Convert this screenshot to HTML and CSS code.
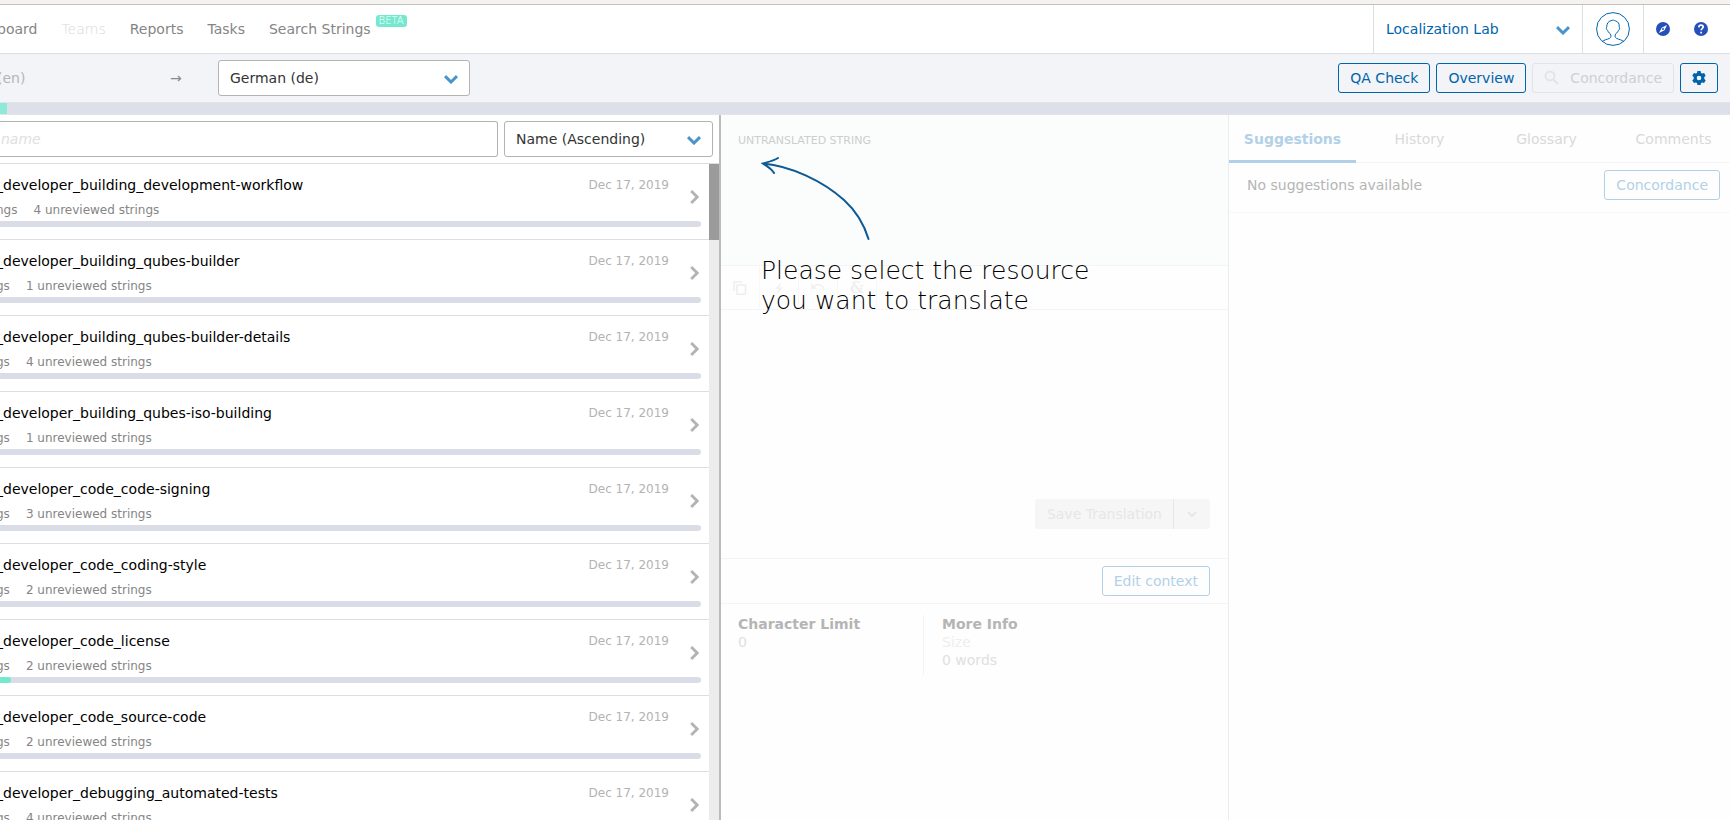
FILE: index.html
```
<!DOCTYPE html>
<html lang="en">
<head>
<meta charset="utf-8">
<title>Localization Lab – Translate</title>
<link rel="stylesheet" href="styles.css">
</head>
<body>
<div class="browser-edge"></div>
<header class="topnav">
  <nav class="menu">
    <a href="#">board</a>
    <a href="#" class="faint">Teams</a>
    <a href="#">Reports</a>
    <a href="#">Tasks</a>
    <a href="#">Search Strings</a>
    <span class="beta">BETA</span>
  </nav>
  <div class="org">
    <select class="org-select" aria-label="Organization"><option>Localization Lab</option></select>
    <svg class="caret" viewBox="0 0 14 9"><path d="M1 1.200l6 5.800 6-5.800"/></svg>
  </div>
  <button class="avatar" aria-label="Account">
    <svg width="34" height="34" viewBox="0 0 34 34" fill="none" stroke="#0064ab"><circle cx="17" cy="17" r="16.400"/><path d="M6 29.600C8 28 11 27.400 13.500 26.400C15.600 25.200 15 23.200 14.300 21.800C12.600 20.600 12 19.500 11.500 18.300C10.300 17.500 10.100 16 10.800 14.800C10.600 11.500 12.500 9.200 15 8.700C16.500 7.800 18.500 8.200 19.700 9C22 9.600 23.500 11.500 23.200 14.800C23.900 16 23.700 17.500 22.500 18.300C22 19.500 21.400 20.600 19.700 21.800C19 23.200 18.400 25.200 20.500 26.400C23 27.400 26 28 28 29.600"/></svg>
  </button>
  <div class="helpers">
    <button class="round" aria-label="Explore"><svg width="14" height="14" viewBox="0 0 14 14"><circle cx="7" cy="7" r="7" fill="#2450b8"/><path d="M11 3L8.500 8.200 3 11l2.700-5.300z" fill="#fff"/><circle cx="7" cy="7" r="1" fill="#2450b8"/></svg></button>
    <button class="round" aria-label="Help"><svg width="14" height="14" viewBox="0 0 14 14"><circle cx="7" cy="7" r="7" fill="#2450b8"/><path d="M4.800 5.400C4.900 3.900 5.800 3.200 7 3.200s2.200.7 2.200 1.900c0 1.500-2.100 1.500-2.100 3.200M7.100 9.700v1.700" fill="none" stroke="#fff" stroke-width="1.700"/></svg></button>
  </div>
</header>

<div class="toolbar">
  <span class="source">(en)</span>
  <span class="arrow">→</span>
  <div class="pick language">
    <select aria-label="Target language"><option>German (de)</option></select>
    <svg class="caret" viewBox="0 0 14 9"><path d="M1 1.200l6 5.800 6-5.800"/></svg>
  </div>
  <div class="actions">
    <button class="btn">QA Check</button>
    <button class="btn">Overview</button>
    <button class="btn off" disabled><svg width="16" height="16" viewBox="0 0 16 16" fill="none" stroke="#e3e3e5" stroke-width="1.800"><circle cx="6" cy="6" r="4.500"/><path d="M9.300 9.300L14 14"/></svg>Concordance</button>
    <button class="btn gear" aria-label="Settings"><svg width="14" height="14" viewBox="0 0 14 14"><path fill="#0064ab" fill-rule="evenodd" d="M5.400 0h3.200l.4 1.900 1.200.7 1.900-.6 1.600 2.800L12.300 6v2l1.400 1.200-1.600 2.800-1.900-.6-1.200.7-.4 1.900H5.400L5 12.100l-1.200-.7-1.900.6L.3 9.200 1.700 8V6L.3 4.800 1.900 2l1.900.6L5 1.900zM7 4.700a2.300 2.300 0 100 4.600 2.300 2.300 0 000-4.600z"/></svg></button>
  </div>
</div>
<div class="progress"><span></span></div>

<main class="workspace">
  <section class="resources">
    <div class="filters">
      <input class="search" type="text" placeholder="name" aria-label="Filter by name">
      <div class="pick sort">
        <select aria-label="Sort"><option>Name (Ascending)</option></select>
        <svg class="caret" viewBox="0 0 14 9"><path d="M1 1.200l6 5.800 6-5.800"/></svg>
      </div>
    </div>
    <div class="scroller">
      <ul class="list" id="list"></ul>
      <div class="track"><div class="thumb"></div></div>
    </div>
  </section>

  <section class="editor">
    <div class="source-string"><h2>UNTRANSLATED STRING</h2></div>
    <div class="tools">
      <button aria-label="Copy source"><svg width="14" height="14" viewBox="0 0 14 14" fill="none" stroke="#ededed" stroke-width="1.500"><path d="M1 10V1h8"/><rect x="4" y="4" width="8.500" height="9.200" rx=".5"/></svg></button>
      <button aria-label="Machine translation"><svg width="14" height="14" viewBox="0 0 14 14" fill="#f1f1f1"><path d="M9.500 1L3 8h3.500l-2 5.500L11 6.500H7.500z"/></svg></button>
      <button aria-label="Undo"><svg width="14" height="14" viewBox="0 0 14 14" fill="#f1f1f1"><path d="M0 2v6h6L3.800 5.800c3-2.500 7-1.500 8.700 3.200l1.500-.5C12 2.500 6.500 1 2.500 4.500z"/></svg></button>
      <button aria-label="Special characters" class="amp">&amp;</button>
    </div>
    <div class="translation">
      <div class="split">
        <button class="save" disabled>Save Translation</button>
        <button class="more" disabled aria-label="More save options"><svg width="10" height="7" viewBox="0 0 10 7" fill="none" stroke="#e6e6e6" stroke-width="1.800"><path d="M1 1l4 4 4-4"/></svg></button>
      </div>
    </div>
    <div class="context"><button class="btn pale">Edit context</button></div>
    <div class="details">
      <div class="detail"><h3>Character Limit</h3><p>0</p></div>
      <div class="detail info"><h3>More Info</h3><p class="dim">Size</p><p>0 words</p></div>
    </div>
    <div class="hint">
      <svg width="110" height="84" viewBox="0 0 110 84" fill="none" stroke="#0d5a94" stroke-width="2" stroke-linecap="round"><path d="M2 6.500C30 9 62 24 83 43C94 53 103 67 107.500 82M17 1C12 4 7 5 2 6.500C6 9 11 12 13 16"/></svg>
      <p>Please select the resource<br>you want to translate</p>
    </div>
  </section>

  <aside class="side">
    <div class="tabs">
      <button class="on">Suggestions</button><button>History</button><button>Glossary</button><button>Comments</button>
    </div>
    <div class="empty"><span>No suggestions available</span><button class="btn pale">Concordance</button></div>
  </aside>
</main>
<script src="app.js"></script>
</body>
</html>
```
FILE: styles.css
```
* { box-sizing: border-box; }
body {
  margin: 0;
  height: 100vh;
  overflow: hidden;
  display: flex;
  flex-direction: column;
  font: 14px/18px "DejaVu Sans", sans-serif;
  color: #333;
  background: #fff;
}
button, input, select { font: inherit; margin: 0; }
button { background: none; border: 0; padding: 0; cursor: pointer; }
h2, h3, p, ul { margin: 0; padding: 0; }
svg { display: block; }

.browser-edge { flex: none; height: 5px; background: #f4f3f1; border-bottom: 1px solid #c6c1b8; }

.topnav { flex: none; height: 49px; display: flex; border-bottom: 1px solid #dcdee6; }
.menu { flex: 1; display: flex; align-items: center; gap: 24px; margin-left: -3px; }
.menu a { color: #858585; text-decoration: none; }
.menu .faint { color: #d8d8d8; font-weight: 200; }
.beta {
  margin: -16px 0 0 -19px;
  padding: 0 3px;
  border-radius: 3px;
  background: #74e9d0;
  color: #fff;
  font-size: 10px;
  font-weight: 200;
  line-height: 12px;
}
.org { position: relative; width: 210px; border-left: 1px solid #dcdee6; border-right: 1px solid #dcdee6; }
select { appearance: none; width: 100%; height: 100%; border: 0; background: none; color: inherit; padding: 0 11px; }
.org-select { color: #0064ab; padding-left: 12px; }
.caret { position: absolute; right: 11px; top: 50%; width: 14px; height: 9px; margin-top: -3px; fill: none; stroke: #4a94cb; stroke-width: 3; pointer-events: none; }
.org .caret { right: 12px; }
.avatar { width: 60px; display: grid; place-items: center; }
.helpers { width: 87px; display: flex; align-items: center; gap: 24px; padding-left: 12px; border-left: 1px solid #dcdee6; }

.toolbar { flex: none; height: 48px; display: flex; align-items: center; padding-right: 12px; background: #f3f4f7; }
.source { width: 173px; margin-left: -3px; color: #b4b4b4; }
.arrow { width: 48px; color: #8a8a8a; }
.pick { position: relative; height: 36px; border: 1px solid #b3b3b3; border-radius: 3px; background: #fff; }
.language { width: 252px; }
.actions { margin-left: auto; display: flex; gap: 6px; }
.btn { height: 30px; padding: 0 11px; border: 1px solid #0064ab; border-radius: 3px; background: none; color: #0064ab; white-space: nowrap; }
.btn.off { display: flex; align-items: center; gap: 10px; border-color: #e2e3e6; color: #cfcfd1; }
.btn.pale { border-color: #b2d1e8; color: #b2d1e8; }

.progress { flex: none; height: 13px; background: #dde0e9; border: 1px solid #e2e4ec; border-width: 1px 0; }
.progress span { display: block; width: 7px; height: 100%; background: #8eead8; }

.workspace { flex: 1; min-height: 0; display: grid; grid-template-columns: 721px minmax(0, 508fr) minmax(0, 501fr); }

.resources { display: flex; flex-direction: column; min-height: 0; border-right: 2px solid #bbb; }
.filters { flex: none; display: flex; gap: 6px; padding: 6px 6px 6px 0; border-bottom: 1px solid #dcdee3; }
.search { flex: 1; min-width: 0; height: 36px; padding: 0 12px 0 1px; border: 1px solid #b3b3b3; border-left: 0; border-radius: 0 3px 3px 0; }
.search::placeholder { color: #e0e0e0; font-style: italic; opacity: 1; }
.sort { width: 209px; }
.scroller { flex: 1; min-height: 0; display: flex; overflow: hidden; }
.list { flex: 1; list-style: none; }
.list li { position: relative; height: 76px; padding-top: 12px; border-bottom: 1px solid #dcdee3; }
.row-main { display: flex; justify-content: space-between; margin: 0 40px 0 -4px; }
.row-main a { color: #000; text-decoration: none; }
.row-main time { font-size: 12px; color: #b3b3b3; }
.stats { display: flex; gap: 16px; margin: 7px 0 0 -4px; font-size: 12px; color: #858585; }
.bar { height: 6px; margin: 2px 8px 0 0; border-radius: 0 3px 3px 0; background: #dadde7; }
.bar span { display: block; height: 6px; border-radius: 0 3px 3px 0; background: #74e9d0; }
.go { position: absolute; right: 10px; top: 26px; }
.track { width: 10px; background: #ececec; }
.thumb { height: 76px; background: #9b9b9b; }

.editor { position: relative; border-right: 1px solid #ececf0; background: #fefefe; }
.source-string { height: 151px; padding: 17px; background: #fbfdfc; border-bottom: 1px solid #f4f4f6; }
.source-string h2 { font-size: 11px; font-weight: 400; color: #cdcdcd; }
.tools { display: flex; height: 44px; border-bottom: 1px solid #f4f4f6; }
.tools button { width: 39px; display: grid; place-items: center; border-right: 1px solid #f7f7f8; }
.tools .amp { color: #f0f0f0; font: bold 16px "DejaVu Serif", serif; }
.translation { height: 249px; display: flex; justify-content: flex-end; align-items: flex-end; padding: 0 18px 29px 0; border-bottom: 1px solid #f4f4f6; }
.split { display: flex; height: 30px; border-radius: 3px; background: #f6f6f6; }
.save { padding: 0 11px 0 12px; color: #e6e6e6; }
.more { width: 37px; display: grid; place-items: center; border-left: 1px solid #e6e6e6; }
.context { height: 45px; display: flex; justify-content: flex-end; align-items: center; padding-right: 18px; border-bottom: 1px solid #f4f4f6; }
.details { display: flex; padding: 11px 17px; }
.detail { width: 185px; height: 60px; color: #e0e0e0; }
.info { padding-left: 18px; border-left: 1px solid #f3f3f3; }
.detail h3 { font-size: 14px; line-height: 18px; color: #b5b5b5; }
.detail .dim { color: #eee; }
.hint { position: absolute; left: 40px; top: 42px; color: #000; }
.hint p { margin-top: 15px; font-size: 25px; font-weight: 200; line-height: 30px; white-space: nowrap; }

.side { background: #fefefe; }
.tabs { display: grid; grid-template-columns: repeat(4, 1fr); height: 48px; margin-right: -7px; border-bottom: 1px solid #f5f5f7; }
.tabs button { height: 48px; padding-top: 2px; color: #d9d9d9; border-bottom: 3px solid transparent; }
.tabs .on { color: #b2d1e8; font-weight: 700; border-color: #b2d1e8; }
.empty { height: 50px; display: flex; justify-content: space-between; align-items: center; padding: 0 10px 5px 18px; border-bottom: 1px solid #f7f7f8; color: #b5b5b5; }
```
FILE: app.js
```
const resources = [
  ["_developer_building_development-workflow", "ngs", 4, 0],
  ["_developer_building_qubes-builder", "gs", 1, 0],
  ["_developer_building_qubes-builder-details", "gs", 4, 0],
  ["_developer_building_qubes-iso-building", "gs", 1, 0],
  ["_developer_code_code-signing", "gs", 3, 0],
  ["_developer_code_coding-style", "gs", 2, 0],
  ["_developer_code_license", "gs", 2, 11],
  ["_developer_code_source-code", "gs", 2, 0],
  ["_developer_debugging_automated-tests", "gs", 4, 0]
];
document.getElementById("list").innerHTML = resources.map(([name, unit, count, done]) => `
  <li>
    <div class="row-main"><a href="#">${name}</a><time>Dec 17, 2019</time></div>
    <div class="stats"><span>${unit}</span><span>${count} unreviewed strings</span></div>
    <div class="bar"><span style="width:${done}px"></span></div>
    <svg class="go" width="9" height="14" viewBox="0 0 9 14" fill="none" stroke="#b3b3b3" stroke-width="2.800"><path d="M1.200 1l6 6-6 6"/></svg>
  </li>`).join("");
```
